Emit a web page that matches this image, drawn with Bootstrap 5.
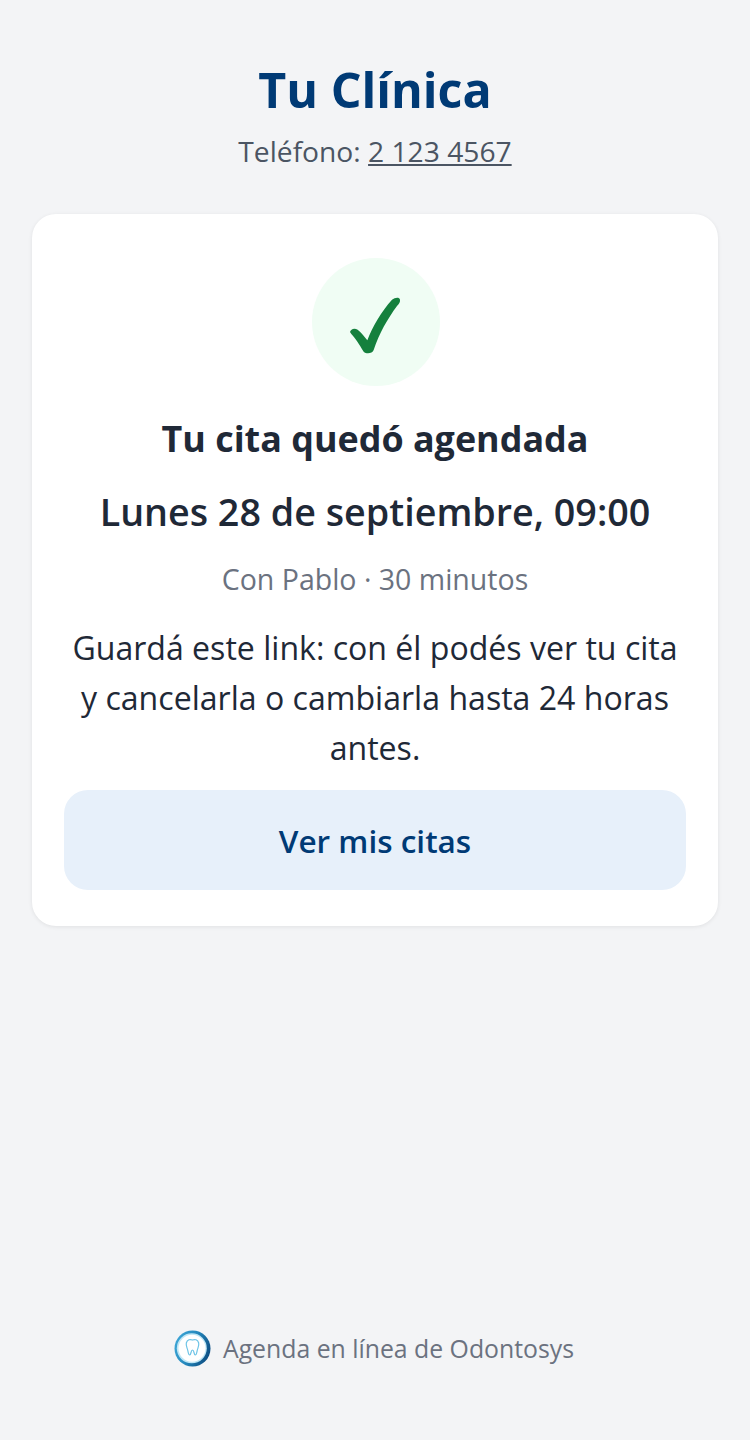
<!DOCTYPE html>
<html lang="es"><head><meta charset="utf-8">
<link href="https://cdn.jsdelivr.net/npm/bootstrap@5.3.0/dist/css/bootstrap.min.css" rel="stylesheet">
<style>
html,body{height:100%}
body{background:#f3f4f6;font-family:"Open Sans","Noto Sans",sans-serif;color:#1f2937}
.shell{min-height:1440px;padding:59px 32px 0}
.clinic{font-size:48.4px;font-weight:700;color:#003a75;line-height:60px;margin:0}
.phone{font-size:28.2px;line-height:40px;color:#4b5563;margin-top:12px}
.phone a{color:#4b5563}
.panel{margin-top:43px;background:#fff;border-radius:24px;padding:44px 32px 36px;box-shadow:0 1px 4px rgba(0,0,0,.08)}
.okcircle{width:128px;height:128px;display:block;margin-left:248px}
.t1{font-size:35.9px;font-weight:700;line-height:48px;margin:29px 0 0}
.t2{font-size:37.7px;font-weight:600;line-height:48px;margin:25px 0 0}
.t3{font-size:28.5px;color:#6b7280;line-height:40px;margin-top:23px}
.t4{font-size:32.1px;line-height:50px;margin:24px 0 0}
.cta{background:#e7f0fa;color:#003a75;font-size:31.5px;font-weight:600;height:100px;border-radius:24px;margin-top:17px;padding-top:2px}
.foot{font-size:24.8px;color:#6b7280;margin-top:auto;padding:0 2px 73px 0;gap:12px}
</style></head><body>
<div class="shell d-flex flex-column">
<div class="text-center">
<h1 class="clinic">Tu Clínica</h1>
<div class="phone">Teléfono: <a href="#">2 123 4567</a></div>
</div>
<div class="panel text-center">
<svg class="okcircle" viewBox="36 24 384 384"><circle cx="228" cy="216" r="192" fill="#f0fdf4"/><path d="M150 246C152 237 163 233 173 239C185 249 194 261 202 271C217 231 244 184 276 149C285 142 298 140 300 149C301 156 297 161 291 168C263 206 237 251 221 300C217 311 199 313 191 305C179 285 164 262 154 252Z" fill="#15803d"/></svg>
<h2 class="t1">Tu cita quedó agendada</h2>
<div class="t2">Lunes 28 de septiembre, 09:00</div>
<div class="t3">Con Pablo · 30 minutos</div>
<p class="t4">Guardá este link: con él podés ver tu cita y cancelarla o cambiarla hasta 24 horas antes.</p>
<div class="cta d-flex align-items-center justify-content-center">Ver mis citas</div>
</div>
<div class="foot d-flex align-items-center justify-content-center">
<svg width="37" height="37" viewBox="0 0 37 37"><defs><linearGradient id="rg" x1="0" y1="0.2" x2="1" y2="0.6"><stop offset="0" stop-color="#3fa8d8"/><stop offset=".5" stop-color="#2488bd"/><stop offset="1" stop-color="#0d4f84"/></linearGradient></defs><circle cx="18.500" cy="18.500" r="18" fill="url(#rg)"/><circle cx="17.800" cy="18.300" r="15" fill="#bfe6f5"/><circle cx="18" cy="18.200" r="13.500" fill="#fff"/><path d="M12.300 13c1-3.500 4-4 6.200-3 2.200-1 5.200-.5 6.200 3 .6 3-1 5-1.500 7.500-.4 2.200-.8 4.500-2 4.500-1.300 0-1-5-2.700-5s-1.400 5-2.700 5c-1.200 0-1.600-2.300-2-4.500-.5-2.500-2.100-4.500-1.500-7.500z" fill="#fff" stroke="#6cc3e6" stroke-width="1.200"/></svg>
<span>Agenda en línea de Odontosys</span>
</div>
</div>
</body></html>
